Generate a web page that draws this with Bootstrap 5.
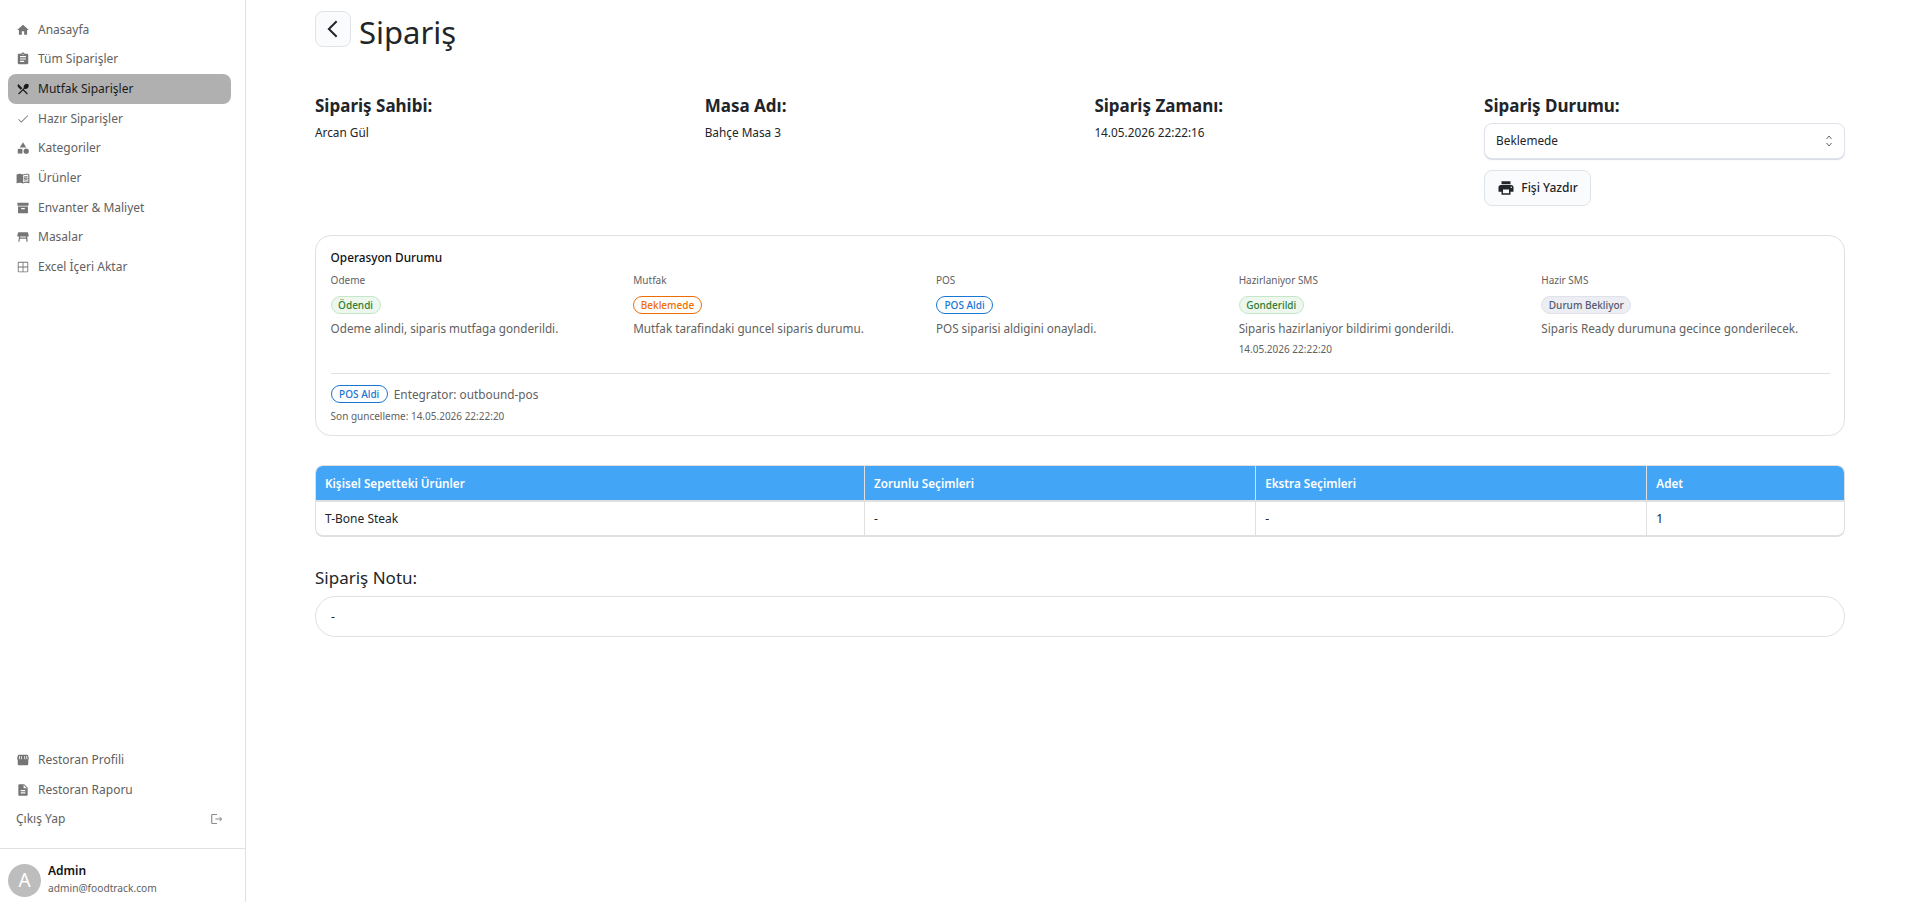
<!doctype html>
<html lang="tr">
<head>
<meta charset="utf-8">
<title>Sipariş</title>
<link href="https://cdn.jsdelivr.net/npm/bootstrap@5.3.0/dist/css/bootstrap.min.css" rel="stylesheet">
<style>
html,body{height:100%}
body{font-family:"Noto Sans","Open Sans",sans-serif;font-size:12px;color:#212529;background:#fff;overflow:hidden}
.side{width:246px;height:902px;border-right:1px solid #e0e0e0;flex:none}
.side-nav{padding:15px 14px 0 8px}
.side-link{height:29.67px;padding-left:8px;color:#616161;font-size:12px;border-radius:8px;text-decoration:none}
.side-link svg{width:14px;height:14px;fill:#757575;flex:none;margin-right:8px}
.side-link.cur{background:#b0b0b0;color:#1a1a1a}
.side-link.cur svg{fill:#1a1a1a}
.side-bottom{padding:0 14px 14px 8px}
.side-exit{padding-left:8px;padding-right:7px;color:#616161}
.side-exit svg{width:14px;height:14px;fill:#8a8a8a;margin:0}
.side-foot{height:54px;border-top:1px solid #e0e0e0;padding:15px 8px 0}
.who{width:33px;height:33px;border-radius:50%;background:#bdbdbd;color:#fff;font-size:19px;flex:none}
.who-text{margin:-1px 0 0 3px}
.who-name{font-size:12px;font-weight:600;color:#111;line-height:15px}
.who-mail{font-size:10.2px;color:#616161;line-height:15px;margin-top:3px}
.page{padding:11px 61px 0 69px}
.back-btn{width:36px;height:36px;border:1px solid #dfe3ea;border-radius:8px;background:#fafbfc;padding:0}
.back-btn svg{width:22px;height:22px;fill:none;stroke:#212529;stroke-width:2.2}
.page-h{font-size:31px;font-weight:400;line-height:42px;margin:0 0 0 8px;color:#212529}
.meta-row{--bs-gutter-x:28.8px;margin-top:41px}
.meta-h{font-size:17px;font-weight:700;line-height:24px;margin:0 0 5px;color:#212529}
.meta-v{font-size:11.8px;line-height:18px;margin:0}
.pick{height:36px;font-size:11.8px;border:1px solid #dfe3ea;border-radius:8px;padding:0 28px 0 11px;color:#212529;box-shadow:0 1px 1px #d8dae6;background-size:10px 16px;background-position:right 10px center;background-image:url("data:image/svg+xml,%3Csvg xmlns='http://www.w3.org/2000/svg' viewBox='0 0 10 16'%3E%3Cpath d='M2.500 6l2.500-3 2.500 3M2.500 10l2.500 3 2.500-3' fill='none' stroke='%23666' stroke-width='1'/%3E%3C/svg%3E")}
.print-btn{margin-top:11px;height:36px;width:107px;border:1px solid #dfe3ea;border-radius:8px;background:#fafbfc;font-size:12px;font-weight:500;color:#212529;padding:0}
.print-btn svg{width:18px;height:18px;fill:#212529;margin-right:6px}
.ops{margin-top:29px;border:1px solid #e0e0e0;border-radius:16px;padding:12px 14px 0 14.6px;height:201px}
.ops-h{font-size:11.8px;font-weight:500;color:#111;line-height:18px;margin-bottom:7px}
.ops-grid{display:grid;grid-template-columns:repeat(5,1fr);gap:14px;height:100px}
.ops-label{font-size:10px;line-height:14px;color:#616161;margin-bottom:9px}
.tag{display:inline-block;font-size:10px;font-weight:500;line-height:16px;padding:0 6.500px;border:1px solid;border-radius:10px;height:18px}
.tag-ok{background:#edf7ee;border-color:#c5e7c7;color:#2e7d32}
.tag-wait{background:#fff;border-color:#ef6c00;color:#ef6c00}
.tag-pos{background:#fff;border-color:#1976d2;color:#1976d2;padding:0 7.500px}
.tag-idle{background:#eceef3;border-color:#dfe2ea;color:#555b6e}
.ops-desc{font-size:11.7px;line-height:18px;color:#616161;margin-top:5px}
.ops-time{font-size:10px;line-height:14px;color:#616161;margin-top:5px}
.ops-rule{border-top:1px solid #e0e0e0;padding-top:11px}
.ops-line{font-size:11.8px;color:#616161;line-height:18px;gap:6px}
.ops-upd{font-size:10px;line-height:14px;color:#616161;margin-top:6px}
.basket{margin-top:29px;border:1px solid #e0e0e0;border-bottom-width:2px;border-radius:8px;overflow:hidden}
.basket table{table-layout:fixed;margin:0;width:100%;font-size:12px}
.basket th{background:#42a5f5;color:#fff;font-weight:600;font-size:11.7px;height:35px;padding:1px 9px 0;border-bottom:2px solid #e0e0e0;vertical-align:middle}
.basket td{height:34px;padding:0 9px;vertical-align:middle;color:#212529;border:0}
.basket th+th,.basket td+td{border-left:1px solid #e0e0e0}
.basket th:nth-child(1){width:35.9%}
.basket th:nth-child(2),.basket th:nth-child(3){width:25.6%}
.note-h{font-size:17px;font-weight:400;line-height:24px;margin:29px 0 6px;color:#212529}
.note-box{height:41px;border:1px solid #e0e0e0;border-radius:21px;padding:0 15px;font-size:12px}
</style>
</head>
<body class="d-flex">
<aside class="side d-flex flex-column">
  <nav class="side-nav d-flex flex-column">
    <a class="side-link d-flex align-items-center" href="#"><svg viewBox="0 0 24 24"><path d="M10 20v-6h4v6h5v-8h3L12 3 2 12h3v8z"/></svg>Anasayfa</a>
    <a class="side-link d-flex align-items-center" href="#"><svg viewBox="0 0 24 24"><path d="M19 3h-4.18C14.4 1.84 13.3 1 12 1c-1.3 0-2.4.84-2.82 2H5c-1.1 0-2 .9-2 2v14c0 1.1.9 2 2 2h14c1.1 0 2-.9 2-2V5c0-1.1-.9-2-2-2zm-7 0c.55 0 1 .45 1 1s-.45 1-1 1-1-.45-1-1 .45-1 1-1zm2 14H7v-2h7v2zm3-4H7v-2h10v2zm0-4H7V7h10v2z"/></svg>Tüm Siparişler</a>
    <a class="side-link cur d-flex align-items-center" href="#"><svg viewBox="0 0 24 24"><path d="M8.1 13.34l2.83-2.83L3.91 3.5c-1.56 1.56-1.56 4.09 0 5.66l4.19 4.18zm6.78-1.81c1.53.71 3.68.21 5.27-1.38 1.91-1.91 2.28-4.65.81-6.12-1.46-1.46-4.2-1.1-6.12.81-1.59 1.59-2.09 3.74-1.38 5.27L3.7 19.87l1.41 1.41L12 14.41l6.88 6.88 1.41-1.41L13.41 13l1.47-1.47z"/></svg>Mutfak Siparişler</a>
    <a class="side-link d-flex align-items-center" href="#"><svg viewBox="0 0 24 24"><path d="M9 16.170 4.830 12l-1 1L9 18.500 21 6.500l-1-1z"/></svg>Hazır Siparişler</a>
    <a class="side-link d-flex align-items-center" href="#"><svg viewBox="0 0 24 24"><path d="M12 2l-5.5 9h11z"/><circle cx="17.5" cy="17.5" r="4.5"/><path d="M3 13.5h8v8H3z"/></svg>Kategoriler</a>
    <a class="side-link d-flex align-items-center" href="#"><svg viewBox="0 0 24 24"><path fill-rule="evenodd" d="M21 5c-1.11-.35-2.33-.5-3.5-.5-1.95 0-4.05.4-5.5 1.5-1.45-1.1-3.55-1.5-5.5-1.5S2.45 4.9 1 6v14.65c0 .25.25.5.5.5.1 0 .15-.05.25-.05C3.1 20.45 5.05 20 6.5 20c1.95 0 4.05.4 5.5 1.5 1.35-.85 3.8-1.5 5.5-1.5 1.65 0 3.35.3 4.75 1.05.1.05.15.05.25.05.25 0 .5-.25.5-.5V6c-.6-.45-1.25-.75-2-1zm0 13.5c-1.1-.35-2.3-.5-3.5-.5-1.7 0-4.15.65-5.5 1.5V8c1.35-.85 3.8-1.5 5.5-1.5 1.2 0 2.4.15 3.5.5v11.5z"/><path d="M17.5 10.5c.88 0 1.73.09 2.5.26V9.24c-.79-.15-1.64-.24-2.5-.24-1.7 0-3.24.29-4.5.83v1.66c1.13-.64 2.7-.99 4.5-.99zM13 12.49v1.66c1.13-.64 2.7-.99 4.5-.99.88 0 1.73.09 2.5.26V11.9c-.79-.15-1.64-.24-2.5-.24-1.7 0-3.24.3-4.5.83zM17.5 14.33c-1.7 0-3.24.29-4.5.83v1.66c1.13-.64 2.7-.99 4.5-.99.88 0 1.73.09 2.5.26v-1.52c-.79-.16-1.64-.24-2.5-.24z"/></svg>Ürünler</a>
    <a class="side-link d-flex align-items-center" href="#"><svg viewBox="0 0 24 24"><path fill-rule="evenodd" d="M2.500 3h19v5h-19zM3.500 9.500h17V21h-17zM9 12v2h6v-2z"/></svg>Envanter &amp; Maliyet</a>
    <a class="side-link d-flex align-items-center" href="#"><svg viewBox="0 0 24 24"><path d="M21.96 9.73l-1.43-5C20.41 4.3 20.02 4 19.57 4H4.43c-.45 0-.84.3-.96.73l-1.43 5c-.18.63.3 1.27.96 1.27h2.2L4 20h2l.67-5h10.67l.66 5h2l-.8-9H21c.66 0 1.14-.64.96-1.27zM6.93 13l.27-2h9.6l.27 2H6.93z"/></svg>Masalar</a>
    <a class="side-link d-flex align-items-center" href="#"><svg viewBox="0 0 24 24"><path fill-rule="evenodd" d="M5 3h14a2 2 0 0 1 2 2v14a2 2 0 0 1-2 2H5a2 2 0 0 1-2-2V5a2 2 0 0 1 2-2zm0 1.500a.5.5 0 0 0-.5.5v6.250h6.750V4.500zm7.750 0v6.750h6.750V5a.5.5 0 0 0-.5-.5zM4.500 12.750V19a.5.5 0 0 0 .5.5h6.250v-6.750zm8.250 0v6.750H19a.5.5 0 0 0 .5-.5v-6.250z"/></svg>Excel İçeri Aktar</a>
  </nav>
  <div class="side-bottom mt-auto d-flex flex-column">
    <a class="side-link d-flex align-items-center" href="#"><svg viewBox="0 0 24 24"><path fill-rule="evenodd" d="M5 3h14a2 2 0 0 1 1.9 1.500l1 4.400c.3 1.200-.1 2.300-.9 3.100V19a2 2 0 0 1-2 2H5a2 2 0 0 1-2-2v-7c-.8-.8-1.200-1.900-.9-3.100l1-4.400A2 2 0 0 1 5 3zm.6 2-.8 5.500h1.400L7 5zm3.400 0-.4 5.500h1.500L10 5zm5 0 .4 5.500h1.500L15.100 5zm3.400 0 .8 5.500h1.400L19 5z"/></svg>Restoran Profili</a>
    <a class="side-link d-flex align-items-center" href="#"><svg viewBox="0 0 24 24"><path d="M14 2H6c-1.1 0-1.99.9-1.99 2L4 20c0 1.1.89 2 1.99 2H18c1.1 0 2-.9 2-2V8l-6-6zm2 16H8v-2h8v2zm0-4H8v-2h8v2zm-3-5V3.5L18.5 9H13z"/></svg>Restoran Raporu</a>
    <a class="side-link side-exit d-flex align-items-center justify-content-between" href="#">Çıkış Yap<svg viewBox="0 0 24 24"><path d="M17 8l-1 1 2.300 2.300H9v1.400h9.300L16 15l1 1 4-4zM4 5h8V3.500H4c-1 0-2 .9-2 2v13c0 1.100 1 2 2 2h8V19H4z"/></svg></a>
  </div>
  <div class="side-foot d-flex gap-1">
    <div class="who d-flex align-items-center justify-content-center">A</div>
    <div class="who-text">
      <div class="who-name">Admin</div>
      <div class="who-mail">admin@foodtrack.com</div>
    </div>
  </div>
</aside>
<main class="page flex-grow-1">
  <div class="d-flex align-items-start">
    <button class="back-btn btn d-flex align-items-center justify-content-center" type="button" aria-label="Geri"><svg viewBox="0 0 24 24"><path d="M16 3.500 7.500 12l8.500 8.500"/></svg></button>
    <h1 class="page-h">Sipariş</h1>
  </div>
  <div class="row row-cols-4 meta-row">
    <div class="col"><h2 class="meta-h">Sipariş Sahibi:</h2><p class="meta-v">Arcan Gül</p></div>
    <div class="col"><h2 class="meta-h">Masa Adı:</h2><p class="meta-v">Bahçe Masa 3</p></div>
    <div class="col"><h2 class="meta-h">Sipariş Zamanı:</h2><p class="meta-v">14.05.2026 22:22:16</p></div>
    <div class="col">
      <h2 class="meta-h">Sipariş Durumu:</h2>
      <select class="form-select pick" aria-label="Sipariş Durumu"><option>Beklemede</option></select>
      <button class="btn print-btn d-flex align-items-center justify-content-center" type="button"><svg viewBox="0 0 24 24"><path d="M19 8H5c-1.660 0-3 1.340-3 3v6h4v4h12v-4h4v-6c0-1.660-1.340-3-3-3zm-3 11H8v-5h8v5zm3-7c-.55 0-1-.45-1-1s.45-1 1-1 1 .45 1 1-.45 1-1 1zm-1-9H6v4h12V3z"/></svg>Fişi Yazdır</button>
    </div>
  </div>
  <section class="ops">
    <div class="ops-h">Operasyon Durumu</div>
    <div class="ops-grid">
      <div><div class="ops-label">Odeme</div><span class="tag tag-ok">Ödendi</span><div class="ops-desc">Odeme alindi, siparis mutfaga gonderildi.</div></div>
      <div><div class="ops-label">Mutfak</div><span class="tag tag-wait">Beklemede</span><div class="ops-desc">Mutfak tarafindaki guncel siparis durumu.</div></div>
      <div><div class="ops-label">POS</div><span class="tag tag-pos">POS Aldi</span><div class="ops-desc">POS siparisi aldigini onayladi.</div></div>
      <div><div class="ops-label">Hazirlaniyor SMS</div><span class="tag tag-ok">Gonderildi</span><div class="ops-desc">Siparis hazirlaniyor bildirimi gonderildi.</div><div class="ops-time">14.05.2026 22:22:20</div></div>
      <div><div class="ops-label">Hazir SMS</div><span class="tag tag-idle">Durum Bekliyor</span><div class="ops-desc">Siparis Ready durumuna gecince gonderilecek.</div></div>
    </div>
    <div class="ops-rule">
      <div class="ops-line d-flex align-items-center"><span class="tag tag-pos">POS Aldi</span><span>Entegrator: outbound-pos</span></div>
      <div class="ops-upd">Son guncelleme: 14.05.2026 22:22:20</div>
    </div>
  </section>
  <div class="basket">
    <table class="table">
      <thead><tr><th>Kişisel Sepetteki Ürünler</th><th>Zorunlu Seçimleri</th><th>Ekstra Seçimleri</th><th>Adet</th></tr></thead>
      <tbody><tr><td>T-Bone Steak</td><td>-</td><td>-</td><td>1</td></tr></tbody>
    </table>
  </div>
  <h3 class="note-h">Sipariş Notu:</h3>
  <div class="note-box d-flex align-items-center">-</div>
</main>
<script src="https://cdn.jsdelivr.net/npm/bootstrap@5.3.0/dist/js/bootstrap.bundle.min.js"></script>
</body>
</html>
